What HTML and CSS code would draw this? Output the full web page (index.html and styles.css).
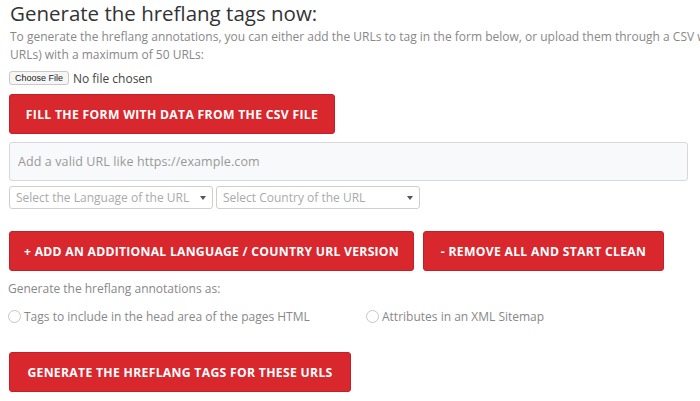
FILE: index.html
```html
<!DOCTYPE html>
<html>
<head>
<meta charset="utf-8">
<link rel="stylesheet" href="styles.css">
</head>
<body>
<div class="wrap">
  <h2 class="title">Generate the hreflang tags now:</h2>
  <p class="intro">To generate the hreflang annotations, you can either add the URLs to tag in the form below, or upload them through a CSV with (a column of the<br>URLs) with a maximum of 50 URLs:</p>
  <div class="file-row">
    <span class="file-btn">Choose File</span>
    <span class="file-name">No file chosen</span>
  </div>
  <div class="btn btn-csv">FILL THE FORM WITH DATA FROM THE CSV FILE</div>
  <div class="url-input">Add a valid URL like https://example.com</div>
  <div class="select-row">
    <div class="select sel-lang"><span>Select the Language of the URL</span><span class="caret"></span></div>
    <div class="select sel-country"><span>Select Country of the URL</span><span class="caret"></span></div>
  </div>
  <div class="btn-row">
    <div class="btn btn-add">+ ADD AN ADDITIONAL LANGUAGE / COUNTRY URL VERSION</div>
    <div class="btn btn-remove">- REMOVE ALL AND START CLEAN</div>
  </div>
  <p class="label">Generate the hreflang annotations as:</p>
  <div class="radio-row">
    <label class="radio r1"><span class="circle"></span>Tags to include in the head area of the pages HTML</label>
    <label class="radio r2"><span class="circle"></span>Attributes in an XML Sitemap</label>
  </div>
  <div class="btn btn-gen">GENERATE THE HREFLANG TAGS FOR THESE URLS</div>
</div>
</body>
</html>
```
FILE: styles.css
```css
html, body {
  margin: 0;
  padding: 0;
  background: #fff;
  overflow: hidden;
}
body {
  font-family: "Open Sans", "Liberation Sans", sans-serif;
  color: #777;
}
.wrap {
  width: 679px;
  padding-left: 9px;
}
.title {
  margin: 0;
  padding-top: 1px;
  font-weight: 400;
  font-size: 20.5px;
  line-height: 24px;
  color: #333;
  letter-spacing: 0;
  margin-left: 1px;
}
.intro {
  margin: 3px 0 0 1px;
  font-size: 12px;
  line-height: 18px;
  white-space: nowrap;
  color: #888;
  letter-spacing: 0;
}
.file-row {
  display: flex;
  align-items: center;
  height: 14px;
  margin-top: 7px;
}
.file-btn {
  box-sizing: border-box;
  width: 60px;
  height: 14px;
  border: 1px solid #c8c8c8;
  border-radius: 3px;
  background: #f6f6f6;
  font-family: "Liberation Sans", sans-serif;
  font-size: 9px;
  line-height: 12px;
  color: #222;
  text-align: center;
}
.file-name {
  margin-left: 4px;
  font-size: 12px;
  color: #444;
}
.btn {
  box-sizing: border-box;
  height: 40px;
  display: flex;
  align-items: center;
  justify-content: center;
  background: #d9272e;
  border: 1px solid #c41f26;
  border-radius: 3px;
  color: #fff;
  font-weight: 700;
  font-size: 12.2px;
  letter-spacing: 0.3px;
  white-space: nowrap;
}
.btn-csv {
  width: 326px;
  margin-top: 9px;
}
.url-input {
  box-sizing: border-box;
  width: 679px;
  height: 39px;
  margin-top: 8px;
  padding-left: 8px;
  display: flex;
  align-items: center;
  background: #f8f9fa;
  border: 1px solid #d8d8d8;
  border-radius: 3px;
  font-size: 12.5px;
  color: #999;
  letter-spacing: 0.1px;
}
.select-row {
  display: flex;
  gap: 3px;
  margin-top: 5px;
}
.select {
  box-sizing: border-box;
  height: 23px;
  display: flex;
  align-items: center;
  justify-content: space-between;
  padding: 0 6px 0 6px;
  border: 1px solid #cfcfcf;
  border-radius: 3px;
  background: #fff;
  font-size: 12px;
  color: #aaa;
  white-space: nowrap;
}
.sel-lang { width: 204px; }
.sel-country { width: 204px; }
.caret {
  width: 0;
  height: 0;
  border-left: 3px solid transparent;
  border-right: 3px solid transparent;
  border-top: 4px solid #555;
}
.btn-row {
  display: flex;
  gap: 9px;
  margin-top: 22px;
}
.btn-add { width: 405px; letter-spacing: 0.25px; }
.btn-remove { width: 241px; }
.label {
  margin: 9px 0 0 -1px;
  font-size: 12px;
  line-height: 18px;
  color: #888;
}
.radio-row {
  display: flex;
  margin-top: 9px;
  height: 18px;
  align-items: center;
}
.radio {
  display: flex;
  align-items: center;
  font-size: 12px;
  color: #888;
}
.r1 { width: 358px; margin-left: -1px; }
.circle {
  box-sizing: border-box;
  width: 13px;
  height: 13px;
  border: 1px solid #c6c6c6;
  border-radius: 50%;
  margin-right: 3px;
}
.btn-gen {
  width: 342px;
  margin-top: 27px;
}
```
